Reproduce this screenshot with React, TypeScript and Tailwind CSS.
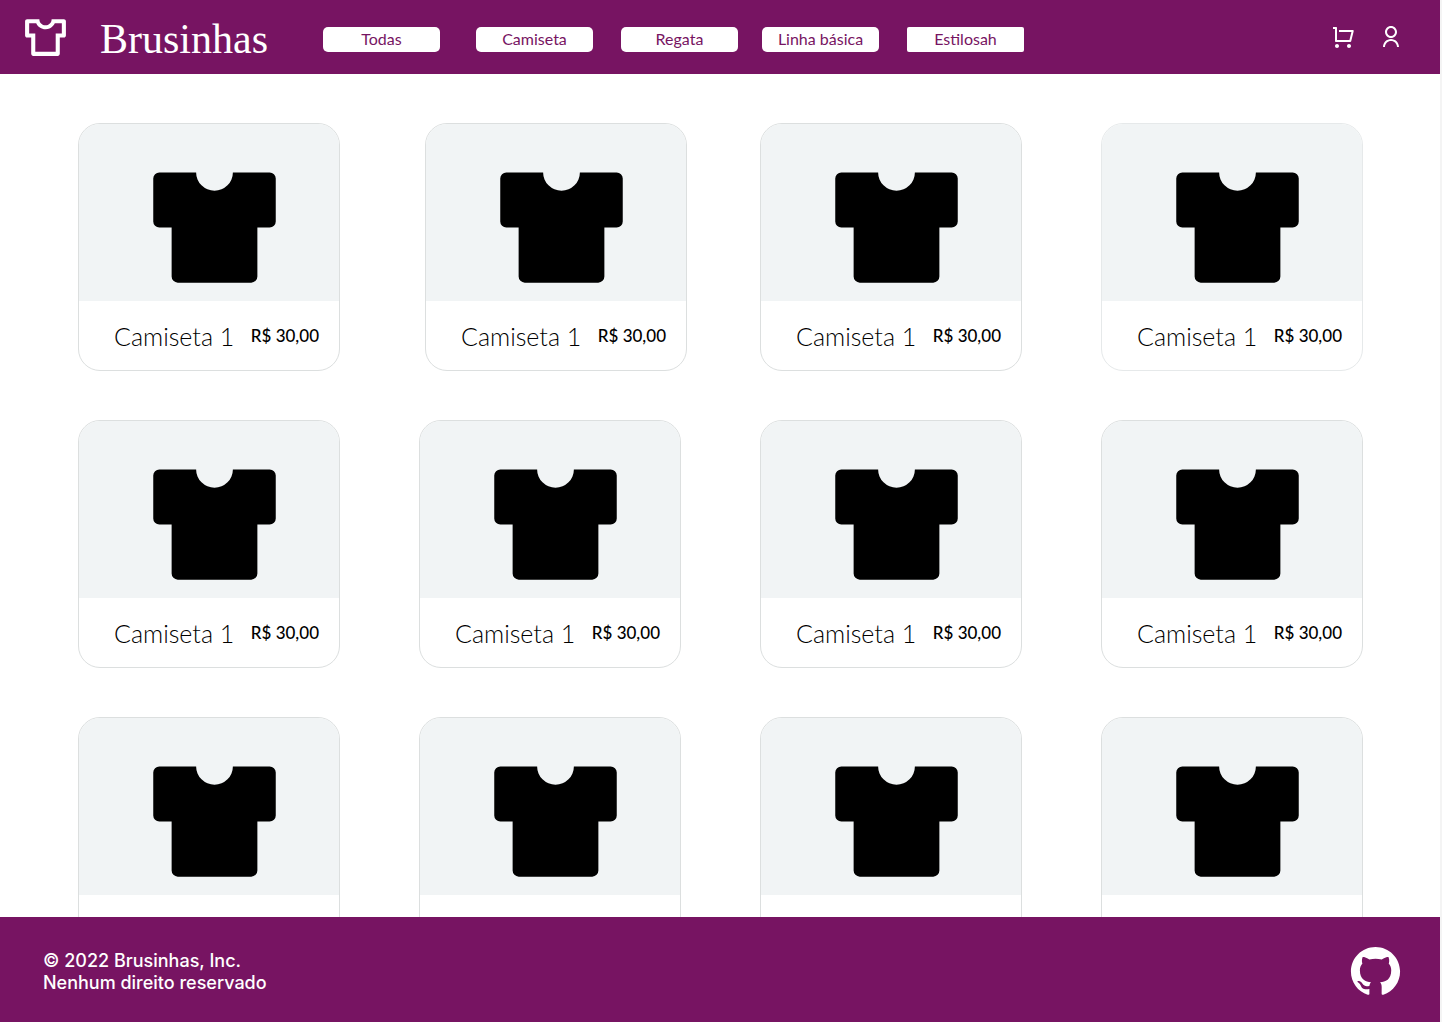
import React from "react";
import {
  RiGithubFill,
  RiShoppingCartLine,
  RiTShirt2Line,
  RiUserLine,
} from "react-icons/ri";

const categories = [
  { label: "Todas", style: "rounded-[5px]" },
  { label: "Camiseta", style: "ml-9 rounded-[5px]" },
  { label: "Regata", style: "ml-7 rounded-[5px]" },
  { label: "Linha básica", style: "ml-6 rounded-[5px]" },
  { label: "Estilosah", style: "ml-7 rounded-[2px]" },
];

const products = Array.from({ length: 12 }, (_, id) => ({
  id,
  name: "Camiseta 1",
  price: "R$ 30,00",
}));

function Shirt() {
  return (
    <svg viewBox="0 0 24 24" className="size-[147px]" fill="currentColor" aria-hidden="true">
      <path d="M9 3a3 3 0 0 0 6 0h6a1 1 0 0 1 1 1v7a1 1 0 0 1-1 1h-2v8a1 1 0 0 1-1 1H6a1 1 0 0 1-1-1v-8H3a1 1 0 0 1-1-1V4a1 1 0 0 1 1-1z" />
    </svg>
  );
}

function ProductCard({ name, price, className }: { name: string; price: string; className: string }) {
  return (
    <article className={`overflow-hidden rounded-[22px] border bg-white ${className}`}>
      <div className="flex justify-center bg-[#f1f4f5] pt-[30px] pl-[11px] text-black">
        <Shirt />
      </div>
      <div className="flex h-[69px] items-center justify-between pr-5 pl-[35px] text-black">
        <h2 className="font-[Lato,sans-serif] text-[25px] leading-5 font-light whitespace-nowrap">{name}</h2>
        <p className="font-[Lato,sans-serif] text-[17px] leading-5 font-medium whitespace-nowrap">{price}</p>
      </div>
    </article>
  );
}

export default function App() {
  return (
    <div className="flex h-screen flex-col border-r-2 border-[#f4f4f4] bg-white">
      <header className="flex h-[74px] shrink-0 items-center bg-[#771462] pr-[37px] pl-[21px] text-white">
        <a href="#" className="flex items-center gap-[30px]">
          <RiTShirt2Line className="size-[49px]" />
          <span className="w-[182px] pt-1 font-['Liberation_Serif',serif] text-[42px] leading-none">Brusinhas</span>
        </a>
        <nav className="ml-[41px] flex items-center pt-1">
          {categories.map((c) => (
            <button
              key={c.label}
              type="button"
              className={`h-[25px] w-[117px] bg-white font-[Lato,sans-serif] text-base leading-none text-[#771462] ${c.style}`}
            >
              {c.label}
            </button>
          ))}
        </nav>
        <div className="ml-auto flex items-center gap-6">
          <button type="button" aria-label="Carrinho">
            <RiShoppingCartLine className="size-6" />
          </button>
          <button type="button" aria-label="Conta">
            <RiUserLine className="size-6" />
          </button>
        </div>
      </header>

      <main className="min-h-0 flex-1 overflow-y-auto [scrollbar-width:none]">
        <div className="grid grid-cols-4 gap-x-[79px] gap-y-[49px] pt-[49px] pr-[77px] pb-[49px] pl-[78px]">
          {products.map((p) => (
            <ProductCard
              key={p.id}
              name={p.name}
              price={p.price}
              className={
                p.id === 1
                  ? "-mr-1.5 ml-1.5 border-[#dcdfdf]"
                  : p.id === 3
                    ? "border-[#e6e9ea]"
                    : "border-[#dcdfdf]"
              }
            />
          ))}
        </div>
      </main>

      <footer className="flex h-[105px] shrink-0 items-center justify-between bg-[#771462] pt-1 pr-[35px] pl-[43px] text-white">
        <p className="font-[Inter,sans-serif] text-[18px] leading-[22px] font-medium">
          © 2022 Brusinhas, Inc.
          <br />
          Nenhum direito reservado
        </p>
        <a href="#" aria-label="GitHub">
          <RiGithubFill className="size-[59px]" />
        </a>
      </footer>
    </div>
  );
}
